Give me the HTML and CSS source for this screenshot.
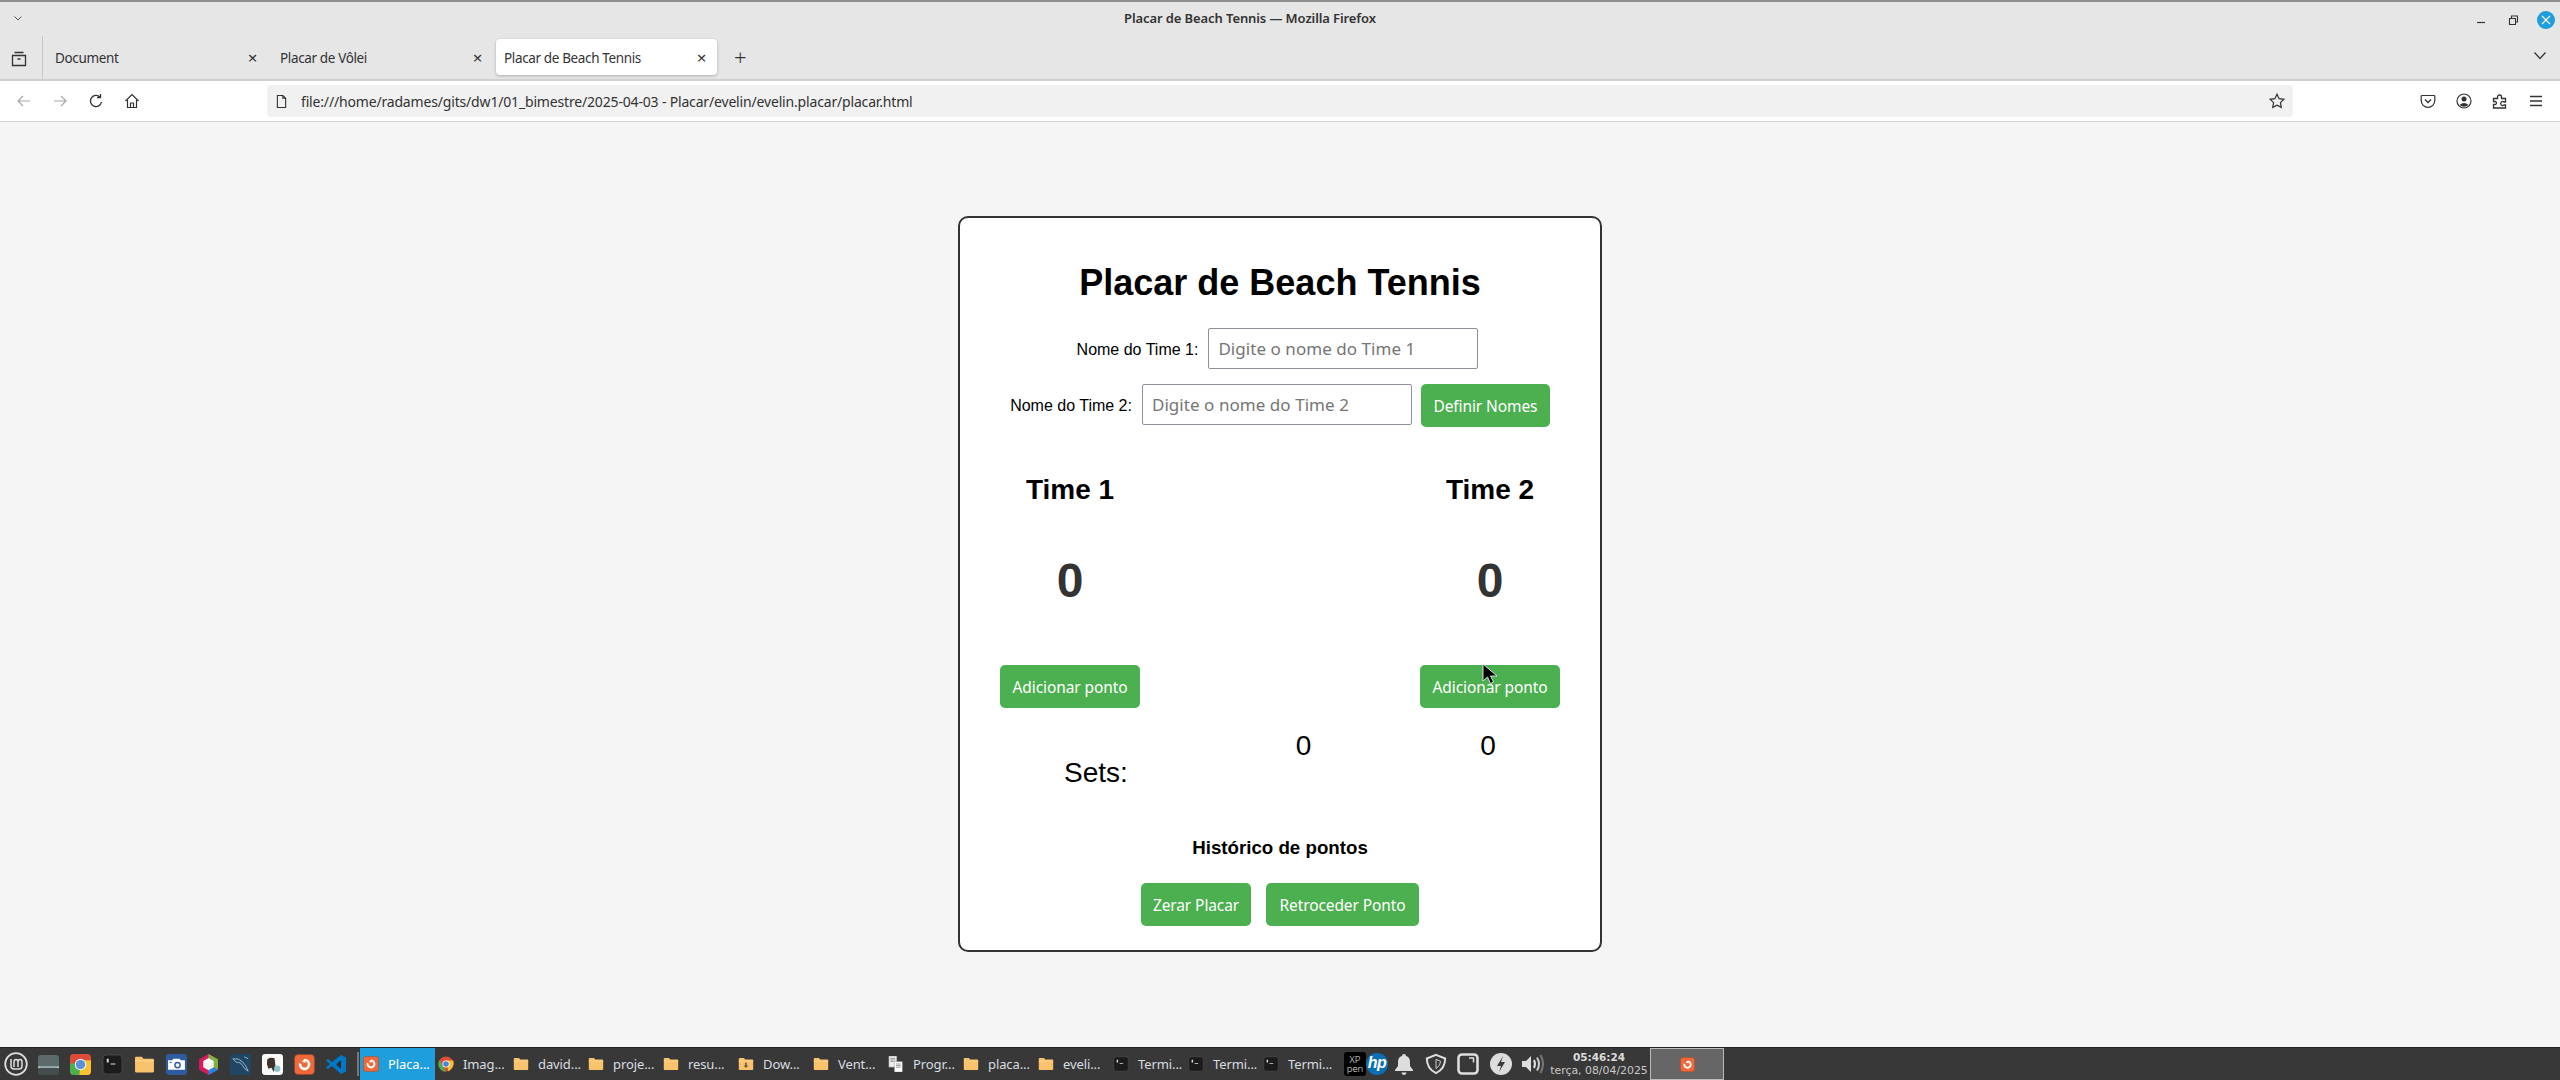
FILE: index.html
```html
<!DOCTYPE html>
<html lang="pt-BR">
<head>
<meta charset="utf-8">
<title>Placar de Beach Tennis</title>
<link rel="stylesheet" href="styles.css">
</head>
<body>
<svg class="defs" width="0" height="0">
  <symbol id="folder" viewBox="0 0 20 20"><path d="M1 3.500q0-1 1-1h5.500l1.500 2h9q1 0 1 1v11q0 1-1 1H2q-1 0-1-1z" fill="#f9c36e"/><path d="M1 6h18v1H1z" fill="#fbd594"/></symbol>
  <symbol id="term" viewBox="0 0 22 22"><rect x="1" y="1" width="20" height="20" rx="3.500" fill="#1b1b1b" stroke="#4a4a4a"/><path d="M5 5h2v4H5zM9 10h5v1H9z" fill="#ddd"/></symbol>
  <symbol id="fox" viewBox="0 0 20 20"><rect x="0.500" y="0.500" width="19" height="19" rx="3.500" fill="#f0693a" stroke="#9c4426" stroke-width=".6"/><path d="M10 4.500a5.500 5.500 0 1 1-5.300 4l2.400 1a3 3 0 1 0 2.900-2.600l1.500 1.700-4-1.300 2.600-2.800z" fill="#fff"/></symbol>
</svg>

<header class="browser">
  <div class="titlebar">
    <svg class="ic chev-sm" viewBox="0 0 12 12"><path d="M2.500 4.500 6 8l3.500-3.500" fill="none" stroke="#555" stroke-width="1"/></svg>
    <span class="wintitle">Placar de Beach Tennis — Mozilla Firefox</span>
    <div class="winctl">
      <svg class="ic wc" viewBox="0 0 16 16"><path d="M4 10.500h8" stroke="#333" stroke-width="1.200"/></svg>
      <svg class="ic wc" viewBox="0 0 16 16"><path d="M4.500 6.500h6v6h-6zM6.500 6V4h6v6h-2" fill="none" stroke="#333" stroke-width="1.100"/></svg>
      <span class="wclose"><svg viewBox="0 0 18 18"><path d="M5 5l8 8M13 5l-8 8" stroke="#fff" stroke-width="1.100"/></svg></span>
    </div>
  </div>
  <div class="tabbar">
    <div class="tabmgr"><svg class="ic" viewBox="0 0 16 16" width="16" height="18"><path d="M3.500 1.500h9M1.500 4.500h13v10h-13z" fill="none" stroke="#333" stroke-width="1.300"/><path d="M6.500 8h3" stroke="#333" stroke-width="1.500"/></svg></div>
    <div class="tab"><span class="tabname">Document</span><span class="tabx">×</span></div>
    <div class="tab"><span class="tabname">Placar de Vôlei</span><span class="tabx">×</span></div>
    <div class="tab active"><span class="tabname">Placar de Beach Tennis</span><span class="tabx">×</span></div>
    <span class="newtab">+</span>
    <svg class="ic chev-lg" viewBox="0 0 14 10"><path d="M1.500 1.500 7 7.500l5.500-6" fill="none" stroke="#333" stroke-width="1.200"/></svg>
  </div>
  <div class="toolbar">
    <div class="nav">
      <svg class="ic nb" viewBox="0 0 16 16"><path d="M14 8H2.500M7 3 2 8l5 5" fill="none" stroke="#a8a8a8" stroke-width="1.200"/></svg>
      <svg class="ic nb" viewBox="0 0 16 16"><path d="M2 8h11.500M9 3l5 5-5 5" fill="none" stroke="#a8a8a8" stroke-width="1.200"/></svg>
      <svg class="ic nb" viewBox="0 0 16 16"><path d="M13.500 9a5.600 5.600 0 1 1-1.500-5M12.500 1v3.500H9" fill="none" stroke="#333" stroke-width="1.300"/></svg>
      <svg class="ic nb" viewBox="0 0 16 16"><path d="M1.500 8 8 1.500 14.500 8M3.500 7v7.500h9V7M6.500 14.500V10h3v4.500" fill="none" stroke="#333" stroke-width="1.200"/></svg>
    </div>
    <div class="urlbar">
      <svg class="ic doc" viewBox="0 0 12 16"><path d="M1.500 1.500h6l3 3v10h-9zM7.500 1.500v3h3" fill="none" stroke="#333" stroke-width="1.200"/></svg>
      <span class="url">file:///home/radames/gits/dw1/01_bimestre/2025-04-03 - Placar/evelin/evelin.placar/placar.html</span>
      <svg class="ic star" viewBox="0 0 16 16"><path d="M8 1.200l2.100 4.500 4.800.6-3.500 3.300.9 4.800L8 12.100l-4.300 2.300.9-4.800L1.100 6.300l4.800-.6z" fill="none" stroke="#333" stroke-width="1.200"/></svg>
    </div>
    <div class="tools">
      <svg class="ic tl" viewBox="0 0 16 16"><path d="M2 2.500h12q.8 0 .8.800v4.200a6.800 6.800 0 0 1-13.600 0V3.300q0-.8.800-.8z" fill="none" stroke="#333" stroke-width="1.200"/><path d="M5 6.500l3 3 3-3" fill="none" stroke="#333" stroke-width="1.300"/></svg>
      <svg class="ic tl" viewBox="0 0 16 16"><circle cx="8" cy="8" r="7" fill="none" stroke="#333" stroke-width="1.200"/><circle cx="8" cy="6" r="2.500" fill="#333"/><path d="M3.500 12q4.500-4 9 0-4.500 3.500-9 0z" fill="#333"/></svg>
      <svg class="ic tl" viewBox="0 0 16 16"><path d="M1.500 5.500h4V4a2 2 0 1 1 4 0v1.500h4v3.500H12a2 2 0 1 0 0 3h1.500v3h-12v-3.500h1.500a1.500 1.500 0 1 0 0-3H1.500z" fill="none" stroke="#333" stroke-width="1.300"/></svg>
      <svg class="ic tl" viewBox="0 0 16 16"><path d="M2 3.500h12M2 8h12M2 12.500h12" stroke="#333" stroke-width="1.300"/></svg>
    </div>
  </div>
</header>

<main class="page">
  <section class="card">
    <h1 class="title">Placar de Beach Tennis</h1>
    <div class="namerow row-one">
      <label class="namelabel" for="t1">Nome do Time 1:</label>
      <input class="nameinput" id="t1" type="text" placeholder="Digite o nome do Time 1">
    </div>
    <div class="namerow row-two">
      <label class="namelabel" for="t2">Nome do Time 2:</label>
      <input class="nameinput" id="t2" type="text" placeholder="Digite o nome do Time 2">
      <button class="btn">Definir Nomes</button>
    </div>
    <div class="teams">
      <div class="team">
        <h2 class="teamname">Time 1</h2>
        <div class="score">0</div>
        <button class="btn">Adicionar ponto</button>
      </div>
      <div class="team">
        <h2 class="teamname">Time 2</h2>
        <div class="score">0</div>
        <button class="btn">Adicionar ponto</button>
      </div>
    </div>
    <div class="sets">
      <span class="setlabel">Sets:</span>
      <span class="setval">0</span>
      <span class="setval">0</span>
    </div>
    <h3 class="history">Histórico de pontos</h3>
    <div class="actions">
      <button class="btn btn-zero">Zerar Placar</button>
      <button class="btn btn-back">Retroceder Ponto</button>
    </div>
  </section>
  <svg class="cursor" viewBox="0 0 16 21"><path d="M1 1v17l4.500-4 3 6.500 3-1.500-3-6H15z" fill="#000" stroke="#fff" stroke-width=".8"/></svg>
</main>

<footer class="panel">
  <div class="launchers">
    <svg class="lico mint" viewBox="0 0 24 24"><circle cx="12" cy="12" r="10.800" fill="none" stroke="#ddd" stroke-width="1.800"/><path d="M7 7v7q0 3 3 3h5q3 0 3-3v-4q0-2.500-2-2.500t-2 2.500v5M14 10q0-2.500-2-2.500T10 10v5" fill="none" stroke="#ddd" stroke-width="1.500"/></svg>
    <svg class="lico" viewBox="0 0 20 20"><rect x="0" y="1" width="20" height="19" rx="3" fill="#5d6a6c"/><path d="M0 12.500h20" stroke="#dff" stroke-width="1"/><rect x="0" y="13" width="20" height="7" rx="2" fill="#454c4d"/></svg>
    <svg class="lico" viewBox="0 0 20 20"><rect width="20" height="20" rx="3.500" fill="#dd4b39"/><path d="M0 9v7.500Q0 20 3.500 20H10L13 9z" fill="#4caf50"/><path d="M10 6h10v10.500q0 3.500-3.500 3.500H9z" fill="#fbc02d"/><circle cx="10" cy="10" r="5.500" fill="#e8f0fe"/><circle cx="10" cy="10" r="4.400" fill="#5b8fd6"/></svg>
    <svg class="lico" viewBox="0 0 22 22"><use href="#term"/></svg>
    <svg class="lico" viewBox="0 0 20 20"><use href="#folder"/></svg>
    <svg class="lico" viewBox="0 0 20 20"><rect width="20" height="20" rx="3" fill="#2f5c9e"/><path d="M2 6h4l1-1.500h6L14 6h4v9H2z" fill="#fff"/><circle cx="11" cy="10.500" r="3.200" fill="#2f5c9e"/><circle cx="11" cy="10.500" r="1.800" fill="#fff"/><rect x="3.500" y="7.500" width="2" height="1" fill="#2f5c9e"/></svg>
    <svg class="lico" viewBox="0 0 20 20"><path d="M10 0l9 5v10l-9 5-9-5V5z" fill="#d81b60"/><path d="M10 0l9 5v10l-9-5z" fill="#7cb342"/><path d="M19 15l-9 5v-5l4-2.500z" fill="#1e88e5"/><path d="M10 4l5 3v5.500l-5 3-5-3V7z" fill="#f3f3ee"/><path d="M10 4l5 3-5 3-5-3z" fill="#fff"/></svg>
    <svg class="lico" viewBox="0 0 22 22"><rect width="22" height="22" rx="2" fill="#1f4662"/><path d="M3 5q6-1 10 3t6 10q-4-2-6-6t-4-3-6-4zM15 3l4 2" fill="none" stroke="#9db8c9" stroke-width="1"/></svg>
    <svg class="lico" viewBox="0 0 20 20"><rect width="20" height="20" rx="3" fill="#fafafa"/><path d="M5 5q3-2 7-1l1 9-2 4-2-4-3 1q-2-5-1-9z" fill="#3e332c"/><circle cx="14.500" cy="14" r="3" fill="#8fc1c8"/></svg>
    <svg class="lico" viewBox="0 0 20 20"><use href="#fox"/></svg>
    <svg class="lico" viewBox="0 0 21 21"><path d="M15 1l5 2.500v14L15 20 6 12l-4 3-2-1.500L4 10 0 6.500 2 5l4 3z" fill="#0078c8"/><path d="M15 6v9l-5-4.500z" fill="#2b2b2b"/></svg>
    <span class="sep"></span>
  </div>
  <div class="winlist">
    <div class="wl on"><svg class="wlico" viewBox="0 0 20 20"><use href="#fox"/></svg><span>Placa...</span></div>
    <div class="wl"><svg class="wlico" viewBox="0 0 20 20"><circle cx="10" cy="10" r="9.500" fill="#dd4b39"/><path d="M2 5l5 9 3 5.500A9.500 9.500 0 0 1 2 5z" fill="#4caf50"/><path d="M10 5.500h9q2.500 7-6 14z" fill="#fbc02d"/><circle cx="10" cy="10" r="4.500" fill="#fff"/><circle cx="10" cy="10" r="3.500" fill="#4a86d8"/></svg><span>Imag...</span></div>
    <div class="wl"><svg class="wlico" viewBox="0 0 20 20"><use href="#folder"/></svg><span>david...</span></div>
    <div class="wl"><svg class="wlico" viewBox="0 0 20 20"><use href="#folder"/></svg><span>proje...</span></div>
    <div class="wl"><svg class="wlico" viewBox="0 0 20 20"><use href="#folder"/></svg><span>resu...</span></div>
    <div class="wl"><svg class="wlico" viewBox="0 0 20 20"><use href="#folder"/><path d="M9 8h2v4h2l-3 3-3-3h2z" fill="#6b5a3a"/></svg><span>Dow...</span></div>
    <div class="wl"><svg class="wlico" viewBox="0 0 20 20"><use href="#folder"/></svg><span>Vent...</span></div>
    <div class="wl"><svg class="wlico" viewBox="0 0 20 20"><path d="M1 0h10v14H1z" fill="#eee" stroke="#777" stroke-width=".5"/><path d="M8 7h10v13H8z" fill="#fff" stroke="#777" stroke-width=".5"/><path d="M3 3h6M3 5h6M3 7h4M10 10h6M10 12h6M10 14h6" stroke="#666" stroke-width=".8"/></svg><span>Progr...</span></div>
    <div class="wl"><svg class="wlico" viewBox="0 0 20 20"><use href="#folder"/></svg><span>placa...</span></div>
    <div class="wl"><svg class="wlico" viewBox="0 0 20 20"><use href="#folder"/></svg><span>eveli...</span></div>
    <div class="wl"><svg class="wlico" viewBox="0 0 22 22"><use href="#term"/></svg><span>Termi...</span></div>
    <div class="wl"><svg class="wlico" viewBox="0 0 22 22"><use href="#term"/></svg><span>Termi...</span></div>
    <div class="wl"><svg class="wlico" viewBox="0 0 22 22"><use href="#term"/></svg><span>Termi...</span></div>
  </div>
  <div class="tray">
    <div class="xppen"><span>XP</span><span>pen</span></div>
    <div class="hp">hp</div>
    <svg class="tr bell" viewBox="0 0 18 22"><path d="M9 1a2 2 0 0 1 2 2q4 1 4 6v4l3 4v1H0v-1l3-4V9q0-5 4-6a2 2 0 0 1 2-2zM6.500 19.500h5a2.500 2.500 0 0 1-5 0z" fill="#ddd"/></svg>
    <svg class="tr shield" viewBox="0 0 24 24"><path d="M12 2l10 4q0 11-10 16Q2 17 2 6z" fill="none" stroke="#ddd" stroke-width="2.200"/><path d="M12 7l5 2q0 5-5 8z" fill="none" stroke="#ddd" stroke-width="1"/></svg>
    <svg class="tr box" viewBox="0 0 22 22"><rect x="1.500" y="1.500" width="19" height="19" rx="3.500" fill="none" stroke="#ddd" stroke-width="2.600"/><path d="M12 5h4.500v4.500" fill="none" stroke="#ddd" stroke-width="1.500"/></svg>
    <svg class="tr bolt" viewBox="0 0 22 22"><circle cx="11" cy="11" r="11" fill="#ddd"/><path d="M13 3l-6 10h4l-2 6 6-10h-4z" fill="#3a3a3a"/></svg>
    <svg class="tr vol" viewBox="0 0 23 22"><path d="M1 8h4l5-5v16l-5-5H1z" fill="#ddd"/><path d="M13 7q2 4 0 8" fill="none" stroke="#ddd" stroke-width="2"/><path d="M16 4.500q4 6.500 0 13" fill="none" stroke="#ccc" stroke-width="2"/><path d="M19.500 2q5 9 0 18" fill="none" stroke="#777" stroke-width="2"/></svg>
    <div class="clock"><b>05:46:24</b><span>terça, 08/04/2025</span></div>
    <div class="workspace"><svg class="wsico" viewBox="0 0 20 20"><use href="#fox"/></svg></div>
  </div>
</footer>
</body>
</html>
```

FILE: styles.css
```css
* { box-sizing: border-box; }
html, body { margin: 0; padding: 0; }
body {
  width: 2560px;
  height: 1080px;
  display: flex;
  flex-direction: column;
  overflow: hidden;
  background: #f5f5f5;
  font-family: "Liberation Sans", Arial, sans-serif;
  position: relative;
}
.defs { position: absolute; }
.ic { display: block; flex: none; }

/* Browser chrome */
.browser {
  height: 122px;
  flex: none;
  font-family: "Noto Sans", sans-serif;
  color: #222;
  background: #e6e6e6;
  border-top: 2px solid #8e8e8e;
}
.titlebar {
  height: 36px;
  position: relative;
  display: flex;
  align-items: center;
  padding-left: 12px;
}
.chev-sm { width: 12px; height: 12px; margin-top: -4px; }
.wintitle {
  position: absolute;
  left: 0; right: 60px; top: 7px;
  text-align: center;
  font-size: 13px;
  font-weight: 600;
  letter-spacing: -.1px;
  color: #333;
}
.winctl {
  margin-left: auto;
  display: flex;
  align-items: center;
  padding-right: 5px;
  gap: 16px;
  margin-top: -1px;
}
.wc { width: 16px; height: 16px; }
.wclose {
  width: 18px; height: 18px; border-radius: 50%;
  background: #1f9ede; display: block;
}
.wclose svg { display: block; }
.tabbar {
  height: 43px;
  display: flex;
  align-items: flex-end;
  border-bottom: 2px solid #cfcfcf;
  position: relative;
  padding-bottom: 4px;
}
.tabmgr {
  width: 43px;
  height: 43px;
  margin-bottom: -4px;
  display: flex;
  align-items: center;
  justify-content: center;
  border-right: 1px solid #c8c8c8;
  padding-top: 2px;
  padding-right: 4px;
}
.tab {
  width: 225px;
  height: 36px;
  display: flex;
  align-items: center;
  padding: 1px 11px 0 12px;
  font-size: 13.500px;
  letter-spacing: -.36px;
  color: #333;
}
.tab.active {
  width: 221px;
  margin-left: 3px;
  padding-left: 8px;
  background: #fff;
  border-radius: 4px;
  box-shadow: 0 1px 3px rgba(0,0,0,.25);
}
.tabname { flex: 1; }
.tabx { font-size: 17px; line-height: 1; color: #333; }
.newtab { font-size: 22px; font-weight: 300; line-height: 36px; margin-left: 17px; color: #333; }
.chev-lg { width: 14px; height: 10px; position: absolute; right: 13px; top: 13px; }
.toolbar {
  height: 41px;
  background: #fff;
  display: flex;
  align-items: center;
  border-bottom: 1px solid #d4d4d4;
}
.nav { display: flex; width: 267px; padding-left: 16px; gap: 20px; }
.nb { width: 16px; height: 16px; }
.urlbar {
  width: 2026px;
  height: 32px;
  background: #f1f1f1;
  border-radius: 4px;
  display: flex;
  align-items: center;
  padding: 0 8px 0 9px;
}
.doc { width: 11px; height: 15px; margin-right: 14px; }
.url { font-size: 14px; letter-spacing: -.17px; color: #333; white-space: pre; flex: 1; }
.star { width: 16px; height: 16px; }
.tools { display: flex; gap: 20px; padding-left: 127px; }
.tl { width: 16px; height: 16px; }

/* Page */
.page {
  flex: 1;
  display: flex;
  justify-content: center;
  align-items: flex-start;
  padding-top: 94px;
  position: relative;
  min-height: 0;
}
.card {
  width: 644px;
  height: 736px;
  background: #fff;
  border: 2px solid #333;
  border-radius: 10px;
  padding: 0 20px;
  display: flex;
  flex-direction: column;
  align-items: stretch;
  flex: none;
}
.title {
  margin: 42px 0 0;
  font-size: 36px;
  line-height: 46px;
  font-weight: 700;
  text-align: center;
  color: #000;
}
.namerow { display: flex; justify-content: center; align-items: flex-start; }
.row-one { margin-top: 22px; height: 41px; padding-right: 5px; align-items: center; }
.row-two { margin-top: 15px; height: 43px; }
.namelabel { font-size: 16px; line-height: 43px; height: 41px; margin-right: 10px; color: #000; }
.nameinput {
  width: 270px;
  height: 41px;
  border: 1px solid #8f8f9d;
  border-radius: 2px;
  padding: 0 9px;
  font: 17px "Noto Sans", sans-serif;
  letter-spacing: .05px;
  background: #fff;
}
.nameinput::placeholder { color: #757575; opacity: 1; }
.row-two .btn { margin-left: 9px; }
.btn {
  height: 43px;
  border: 0;
  border-radius: 5px;
  background: #4caf50;
  color: #fff;
  font: 15.500px "Noto Sans", sans-serif;
  letter-spacing: -.1px;
  padding: 0 12.500px;
  white-space: nowrap;
}
.teams {
  display: flex;
  justify-content: space-between;
  padding: 0 20px;
  margin-top: 47px;
}
.team { display: flex; flex-direction: column; align-items: center; width: 140px; }
.teamname { margin: 0; font-size: 28px; line-height: 32px; font-weight: 700; color: #000; }
.score { margin-top: 47px; font-size: 48px; line-height: 56px; font-weight: 700; color: #333; }
.team .btn { margin-top: 56px; width: 140px; padding: 0; }
.sets {
  display: grid;
  grid-template-columns: 192px 223px 146px;
  padding-left: 20px;
  margin-top: 22px;
  align-items: start;
  color: #000;
}
.setlabel { font-size: 28px; line-height: 32px; text-align: center; margin-top: 27px; }
.setval { font-size: 28px; line-height: 32px; text-align: center; }
.history {
  margin: 47px 0 0;
  font-size: 18.720px;
  line-height: 23px;
  text-align: center;
  font-weight: 700;
  color: #000;
}
.actions { display: flex; justify-content: center; gap: 15px; margin-top: 24px; }
.btn-zero { width: 110px; padding: 0; }
.btn-back { width: 153px; padding: 0; }
.cursor { position: absolute; left: 1482px; top: 541px; width: 16px; height: 21px; }

/* Panel */
.panel {
  height: 33px;
  flex: none;
  background: #383838;
  border-top: 1px solid #222;
  display: flex;
  align-items: center;
  font-family: "Noto Sans", sans-serif;
  color: #d8dde0;
}
.launchers { display: flex; align-items: center; width: 360px; padding-left: 4px; gap: 11px; }
.lico { width: 21px; height: 21px; flex: none; }
.mint { width: 24px; height: 24px; margin-right: -1px; }
.sep { width: 2px; height: 24px; background: #777; margin-left: -1px; }
.winlist { display: flex; height: 32px; }
.wl {
  width: 75px;
  display: flex;
  align-items: center;
  padding-left: 3px;
  gap: 9px;
  font-size: 13px;
  letter-spacing: -.1px;
  white-space: nowrap;
  overflow: hidden;
}
.wl.on { background: #1f9ede; color: #fff; }
.wlico { width: 16px; height: 16px; flex: none; }
.tray { display: flex; align-items: center; margin-left: 9px; height: 32px; position: relative; flex: 1; }
.xppen {
  width: 22px; height: 24px; background: #000; border-radius: 3px;
  display: flex; flex-direction: column; align-items: center; justify-content: center;
  font-size: 9.500px; line-height: 9.500px; font-weight: 300; color: #e4e4e4;
}
.tr { flex: none; height: 22px; }
.hp {
  width: 22px; height: 22px; flex: none; border-radius: 50%;
  background: #0b6fb4; color: #fff;
  font: italic 700 16px/20px "Liberation Sans", sans-serif;
  letter-spacing: -.5px;
  text-align: center;
}
.bell { width: 18px; margin-left: 7px; }
.shield { width: 24px; margin-left: 11px; }
.box { width: 22px; margin-left: 9px; }
.bolt { width: 22px; margin-left: 11px; }
.vol { width: 23px; margin-left: 9px; }
.clock {
  display: flex; flex-direction: column; align-items: center;
  margin-left: 5px; width: 100px;
  font-family: "DejaVu Sans", sans-serif;
  font-size: 10.900px; line-height: 14px; color: #c8c8c8;
  white-space: nowrap;
}
.clock b { color: #ddd; font-size: 10.500px; }
.workspace {
  width: 74px; height: 32px; margin-left: 1px;
  background: #666; border: 1px solid #bbb;
  display: flex; align-items: center; justify-content: center;
}
.wsico { width: 15px; height: 15px; }
```
